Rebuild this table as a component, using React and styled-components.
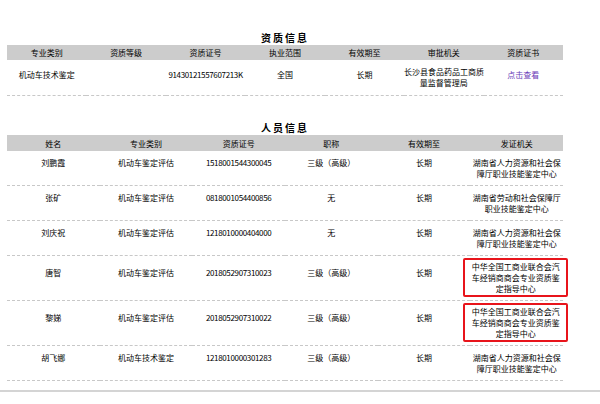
import React from "react";
import styled, { createGlobalStyle } from "styled-components";

const Global = createGlobalStyle`
  html, body { margin: 0; padding: 0; background: #fff; }
  body {
    font-family: "Noto Sans CJK SC", "Liberation Sans", sans-serif;
    color: #000;
    font-size: 8px;
  }
`;

const Page = styled.div`
  width: 600px;
  padding-top: 31px;
`;

const Content = styled.div`
  width: 556px;
  margin-left: 7px;
`;

const SectionTitle = styled.div`
  height: 14px;
  line-height: 14px;
  text-align: center;
  font-size: 10px;
  font-weight: bold;
  letter-spacing: 2px;
  color: #000;
  margin-top: ${(p) => (p.$gap ? "25px" : "0")};
`;

const Table = styled.table`
  width: 556px;
  border-collapse: collapse;
  table-layout: fixed;
`;

const Th = styled.th`
  height: ${(p) => p.$h || 15}px;
  padding: 0;
  background: #cccccc;
  font-weight: normal;
  font-size: 8px;
  line-height: 11px;
  color: #000;
  text-align: center;
  white-space: nowrap;
`;

const Tr = styled.tr`
  border-bottom: 1px dashed #c8c8c8;
`;

const Td = styled.td`
  padding: ${(p) => (p.$single ? "6px 0 12px" : "6px 0 7px")};
  text-align: center;
  vertical-align: middle;
  font-size: 8px;
  line-height: 11px;
  white-space: nowrap;
`;

const PTd = styled.td`
  padding: ${(p) => (p.$single ? "6px 0 17px" : "6px 0 6px")};
  text-align: center;
  vertical-align: middle;
  font-size: 8px;
  line-height: 11px;
  white-space: nowrap;
`;

const Num = styled.span`
  letter-spacing: -0.35px;
`;

const Link = styled.a`
  color: #6a3ab8;
  text-decoration: none;
`;

const Marked = styled.div`
  border: 2px solid #e8141b;
  border-radius: 2px;
  margin: -4px -5px -3px -7px;
  padding: 1px 0;
  line-height: 11px;
`;

const BottomRule = styled.div`
  margin-top: 9px;
  height: 2px;
  background: #d4d4d4;
`;

const qualHead = ["专业类别", "资质等级", "资质证号", "执业范围", "有效期至", "审批机关", "资质证书"];

const staffHead = ["姓名", "专业类别", "资质证号", "职称", "有效期至", "发证机关"];

const staff = [
  { name: "刘鹏霞", cat: "机动车鉴定评估", no: "1518001544300045", title: "三级（高级）", org: ["湖南省人力资源和社会保", "障厅职业技能鉴定中心"] },
  { name: "张矿", cat: "机动车鉴定评估", no: "0818001054400856", title: "无", org: ["湖南省劳动和社会保障厅", "职业技能鉴定中心"] },
  { name: "刘庆祝", cat: "机动车鉴定评估", no: "1218010000404000", title: "无", org: ["湖南省人力资源和社会保", "障厅职业技能鉴定中心"] },
  { name: "唐智", cat: "机动车鉴定评估", no: "2018052907310023", title: "三级（高级）", org: ["中华全国工商业联合会汽", "车经销商商会专业资质鉴", "定指导中心"], marked: true },
  { name: "黎娣", cat: "机动车鉴定评估", no: "2018052907310022", title: "三级（高级）", org: ["中华全国工商业联合会汽", "车经销商商会专业资质鉴", "定指导中心"], marked: true },
  { name: "胡飞娜", cat: "机动车技术鉴定", no: "1218010000301283", title: "三级（高级）", org: ["湖南省人力资源和社会保", "障厅职业技能鉴定中心"] },
];

const Lines = ({ lines }) =>
  lines.map((l, i) => (
    <React.Fragment key={i}>
      {i > 0 && <br />}
      {l}
    </React.Fragment>
  ));

export default function App() {
  return (
    <>
      <Global />
      <Page>
        <Content>
          <SectionTitle>资质信息</SectionTitle>
          <Table>
            <thead>
              <tr>
                {qualHead.map((h) => (
                  <Th key={h}>{h}</Th>
                ))}
              </tr>
            </thead>
            <tbody>
              <Tr>
                <Td $single>机动车技术鉴定</Td>
                <Td $single></Td>
                <Td $single>
                  <Num>91430121557607213K</Num>
                </Td>
                <Td $single>全国</Td>
                <Td $single>长期</Td>
                <Td>
                  <Lines lines={["长沙县食品药品工商质", "量监督管理局"]} />
                </Td>
                <Td $single>
                  <Link href="#">点击查看</Link>
                </Td>
              </Tr>
            </tbody>
          </Table>

          <SectionTitle $gap>人员信息</SectionTitle>
          <Table>
            <thead>
              <tr>
                {staffHead.map((h) => (
                  <Th key={h} $h={16}>
                    {h}
                  </Th>
                ))}
              </tr>
            </thead>
            <tbody>
              {staff.map((s) => (
                <Tr key={s.name}>
                  <PTd $single>{s.name}</PTd>
                  <PTd $single>{s.cat}</PTd>
                  <PTd $single>
                    <Num>{s.no}</Num>
                  </PTd>
                  <PTd $single>{s.title}</PTd>
                  <PTd $single>长期</PTd>
                  <PTd>
                    {s.marked ? (
                      <Marked>
                        <Lines lines={s.org} />
                      </Marked>
                    ) : (
                      <Lines lines={s.org} />
                    )}
                  </PTd>
                </Tr>
              ))}
            </tbody>
          </Table>
        </Content>
        <BottomRule />
      </Page>
    </>
  );
}
